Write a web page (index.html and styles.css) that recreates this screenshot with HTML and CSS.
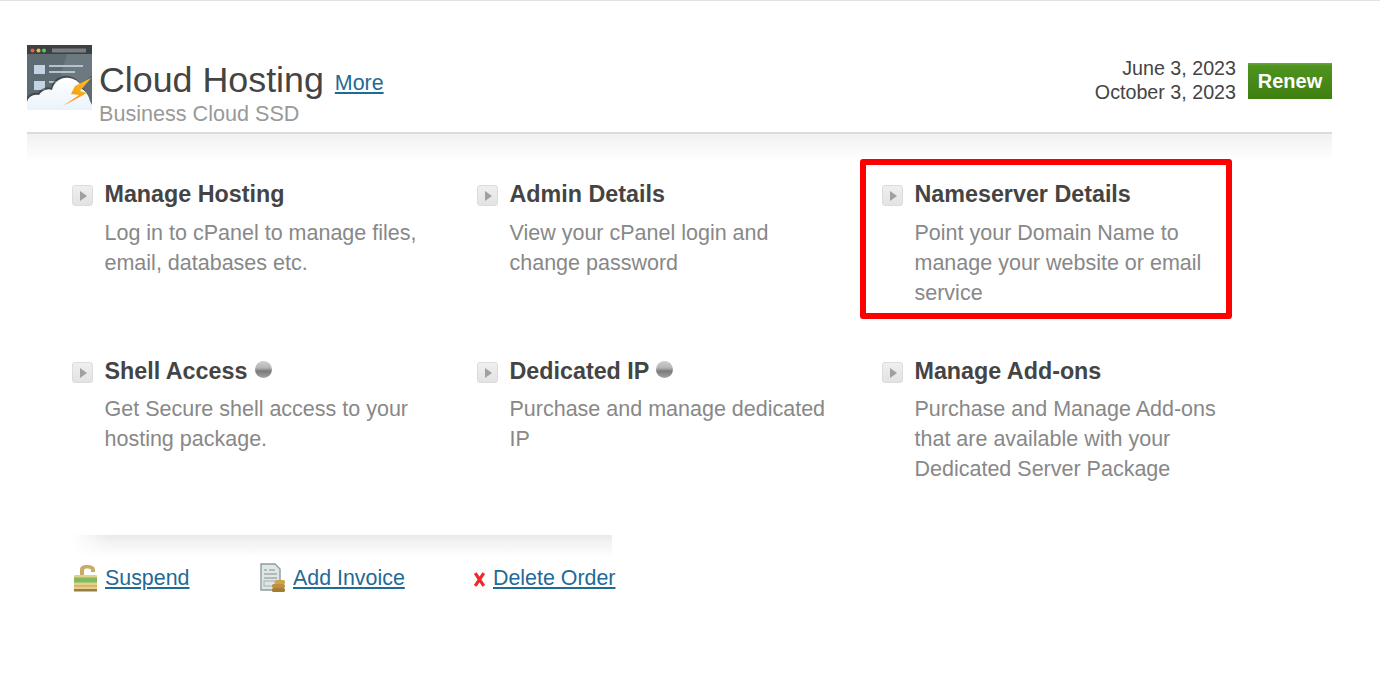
FILE: index.html
```html
<!DOCTYPE html>
<html lang="en">
<head>
<meta charset="utf-8">
<title>Cloud Hosting</title>
<link rel="stylesheet" href="styles.css">
</head>
<body>
<main class="page">
  <header class="head">
    <svg class="product" viewBox="0 0 65 65" aria-hidden="true">
      <defs>
        <linearGradient id="cl" x1="0" y1="0" x2="0" y2="1"><stop offset="0" stop-color="#fff"/><stop offset="1" stop-color="#eaf3fb"/></linearGradient>
        <linearGradient id="bolt" x1="1" y1="0" x2="0" y2="1"><stop offset="0" stop-color="#ffc21e"/><stop offset="1" stop-color="#f28a12"/></linearGradient>
      </defs>
      <rect width="65" height="65" fill="#5f6b72"/>
      <path d="M40 9 L65 9 L65 30 L25 60 Z" fill="#6d7980"/>
      <rect width="65" height="9" fill="#3c4144"/>
      <circle cx="5.5" cy="5.5" r="2" fill="#e2604f"/><circle cx="11.5" cy="5.5" r="2" fill="#e8b84a"/><circle cx="17" cy="5.5" r="2" fill="#5cc16c"/>
      <rect x="25" y="3.5" width="34" height="4" fill="#7a7d7f"/>
      <rect x="7" y="20" width="11" height="9" fill="#c2d4e2"/><rect x="7" y="36" width="11" height="9" fill="#c2d4e2"/>
      <rect x="22" y="20" width="34" height="2" fill="#b3c2cc"/><rect x="22" y="26" width="26" height="2" fill="#b3c2cc"/><rect x="22" y="36" width="8" height="2" fill="#b3c2cc"/>
      <path d="M0 65 V57 C1 52 6 49 12 50 C15 45 21 43 25 45 C27 36 35 32 42 33 C50 34 54 39 55 44 C60 47 62 52 63 56 L65 60 V65 Z" fill="#2b3033" opacity=".6" transform="translate(-1 -2)"/>
      <path d="M0 65 V57 C1 52 6 49 12 50 C15 45 21 43 25 45 C27 36 35 32 42 33 C50 34 54 39 55 44 C60 47 62 52 63 56 L65 60 V65 Z" fill="url(#cl)"/>
      <path d="M64 33 L48 41 L44 49 L52 50 L36 61 L60 48 L53 46 Z" fill="url(#bolt)"/>
    </svg>
    <div class="names">
      <div class="title-line"><h1 class="title">Cloud Hosting</h1><a class="link more" href="#">More</a></div>
      <div class="plan">Business Cloud SSD</div>
    </div>
    <div class="dates">June 3, 2023<br>October 3, 2023</div>
    <a class="renew" href="#">Renew</a>
  </header>
  <div class="divider"></div>

  <section class="grid">
    <article class="card">
      <span class="arrow"></span>
      <div><h2 class="card-title">Manage Hosting</h2><p class="card-text">Log in to cPanel to manage files, email, databases etc.</p></div>
    </article>
    <article class="card">
      <span class="arrow"></span>
      <div><h2 class="card-title">Admin Details</h2><p class="card-text">View your cPanel login and<br>change password</p></div>
    </article>
    <article class="card">
      <span class="arrow"></span>
      <div><h2 class="card-title">Nameserver Details</h2><p class="card-text">Point your Domain Name to manage your website or email service</p></div>
      <span class="highlight"></span>
    </article>
    <article class="card">
      <span class="arrow"></span>
      <div><h2 class="card-title">Shell Access <span class="dot"></span></h2><p class="card-text card-text-tight">Get Secure shell access to your hosting package.</p></div>
    </article>
    <article class="card">
      <span class="arrow"></span>
      <div><h2 class="card-title">Dedicated IP <span class="dot"></span></h2><p class="card-text card-text-tight">Purchase and manage dedicated IP</p></div>
    </article>
    <article class="card">
      <span class="arrow"></span>
      <div><h2 class="card-title">Manage Add-ons</h2><p class="card-text card-text-tight">Purchase and Manage Add-ons that are available with your Dedicated Server Package</p></div>
    </article>
  </section>

  <div class="shadow"></div>
  <nav class="actions">
    <div class="action act-suspend">
      <svg class="ico-lock" viewBox="0 0 24 28" aria-hidden="true">
        <path d="M6 12 V6 C6 2 9 1 13 1 C17 1 21 2 21 6 V8 H17 V6 C17 5 15 4.5 13 4.5 C11 4.5 10 5 10 7 V12 Z" fill="#c9ab66"/>
        <rect x="0" y="11" width="23" height="16" rx="1" fill="#e5cf8e"/>
        <rect x="0" y="13.5" width="23" height="5" fill="#7fbb5f"/>
        <rect x="0" y="21" width="23" height="2" fill="#d9b76a"/>
        <rect x="0" y="25" width="23" height="2.5" fill="#9a7d45"/>
      </svg>
      <a class="link" href="#">Suspend</a>
    </div>
    <div class="action act-invoice">
      <svg class="ico-invoice" viewBox="0 0 26 30" aria-hidden="true">
        <path d="M1 1 H15 L20 6 V27 H1 Z" fill="#dfe6e6" stroke="#8f9c9c" stroke-width="1.4"/>
        <path d="M4 7 H7 M9 7 H15 M4 11 H17 M4 15 H17" stroke="#a3adad" stroke-width="1.4"/>
        <rect x="4" y="18" width="11" height="5" fill="none" stroke="#a3adad" stroke-width="1"/>
        <rect x="15" y="17" width="10" height="4" rx="1.5" fill="#cfa34c"/>
        <rect x="12" y="21" width="13" height="4" rx="1.5" fill="#bd9040"/>
        <rect x="12" y="25" width="13" height="4" rx="1.5" fill="#a57c34"/>
      </svg>
      <a class="link" href="#">Add Invoice</a>
    </div>
    <div class="action act-delete">
      <svg class="ico-x" viewBox="0 0 12 14" aria-hidden="true"><path d="M2 1 L10 13 M10 1 L2 13" stroke="#f0282d" stroke-width="3"/></svg>
      <a class="link" href="#">Delete Order</a>
    </div>
  </nav>
</main>
</body>
</html>
```
FILE: styles.css
```css
* { box-sizing: border-box; }
html, body { margin: 0; padding: 0; background: #fff; }
body {
  height: 689px;
  overflow: hidden;
  border-top: 1px solid #e2e2e2;
  font-family: "Liberation Sans", Arial, sans-serif;
  color: #454545;
}
.page { padding: 44px 48px 0 27px; }
.head { display: flex; align-items: flex-start; height: 87px; }
.product { width: 65px; height: 65px; flex: none; display: block; filter: blur(.4px); }
.names { margin-left: 7px; padding-top: 15px; flex: 1; }
.title-line { display: flex; align-items: baseline; gap: 11px; height: 40px; }
.title { margin: 0; font-size: 35.8px; line-height: 40px; font-weight: 400; color: #444; }
.link { color: #1f6a96; text-decoration: underline; font-size: 21.4px; }
.more { position: relative; top: -2px; }
.plan { font-size: 21.6px; line-height: 26px; color: #999; margin-top: 1px; }
.dates { font-size: 19.7px; line-height: 23.5px; text-align: right; color: #444; margin-top: 12px; }
.renew {
  margin: 18px 0 0 12px;
  width: 84px; height: 36px;
  display: flex; align-items: center; justify-content: center;
  background: linear-gradient(#69a83f 0, #4f9320 8%, #3f7f10 100%);
  color: #fff; font-size: 20px; font-weight: 700; text-decoration: none;
}
.divider {
  height: 30px;
  border-top: 2px solid #dcdcdc;
  background: linear-gradient(#f1f1f1, #fff);
}
.grid {
  display: grid;
  grid-template-columns: repeat(3, 405px);
  grid-auto-rows: 177px;
  padding: 20px 0 0 45px;
}
.card { position: relative; display: flex; align-items: flex-start; gap: 11.5px; }
.arrow {
  flex: none; width: 21px; height: 21px; margin-top: 3px;
  position: relative;
  background: linear-gradient(#efefef, #e3e3e3);
  border: 1px solid #dcdcdc;
  border-radius: 3px;
}
.arrow::after {
  content: ""; position: absolute; left: 7px; top: 4.5px;
  border-left: 7px solid #a0a0a0;
  border-top: 5px solid transparent;
  border-bottom: 5px solid transparent;
}
.card-title { margin: 0; font-size: 23.3px; line-height: 24px; font-weight: 700; color: #444; }
.card-text { margin: 12px 0 0; width: 320px; font-size: 21.5px; line-height: 30px; color: #888; }
.card-text-tight { margin-top: 11px; }
.dot {
  display: inline-block; width: 17px; height: 17px; border-radius: 50%;
  margin-left: 1px; vertical-align: 1px;
  background: linear-gradient(#cfcfcf 0, #b5b5b5 40%, #7a7a7a 60%, #a5a5a5 100%);
  filter: blur(.4px);
}
.highlight {
  position: absolute; left: -22px; top: -23px;
  width: 372px; height: 160px;
  border: 6px solid #ff0000; border-radius: 3px;
}
.shadow {
  margin: -1px 0 0 45px;
  width: 540px; height: 22px;
  background:
    linear-gradient(90deg, #fff 0, rgba(255,255,255,0) 7%),
    linear-gradient(#e9e9e9 0, #f2f2f2 30%, #fff 100%);
}
.actions { display: flex; align-items: center; margin: 1px 0 0 47px; height: 40px; }
.action { display: flex; align-items: center; }
.act-suspend { width: 186px; gap: 7px; }
.act-invoice { width: 213px; gap: 7px; }
.act-delete { gap: 7px; }
.ico-lock { width: 24px; height: 28px; filter: blur(.4px); }
.ico-invoice { width: 26px; height: 30px; filter: blur(.4px); }
.ico-x { width: 13px; height: 15px; margin-top: 3px; }
```
